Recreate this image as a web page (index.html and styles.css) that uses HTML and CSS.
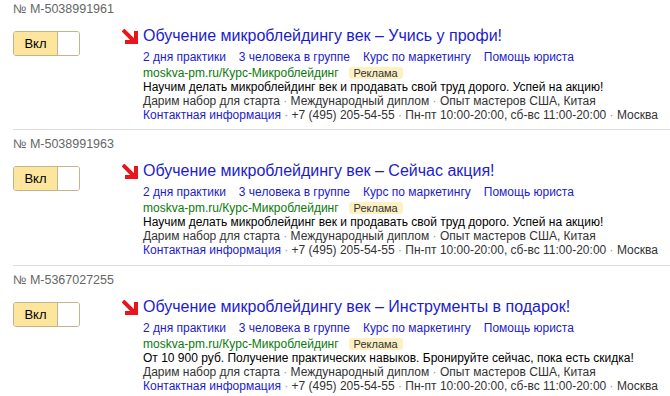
FILE: index.html
```html
<!DOCTYPE html>
<html lang="ru">
<head>
    <meta charset="UTF-8">
    <title>Объявления</title>
    <link rel="stylesheet" href="styles.css">
</head>
<body>
    <div class="list">
        <div class="banner first">
            <div class="banner-id">№ M-5038991961</div>
            <div class="banner-row">
                <div class="toggle">
                    <span class="toggle-on">Вкл</span>
                    <span class="toggle-off"></span>
                </div>
                <div class="ad">
                    <div class="ad-title">
                        <svg class="arrow" width="16" height="15" viewBox="0 0 16 15">
                            <path d="M1 1 L12 12" stroke="#e8151b" stroke-width="4" fill="none"/>
                            <path d="M3 13 L14 13 L14 2" stroke="#e8151b" stroke-width="4" fill="none" stroke-linejoin="miter"/>
                        </svg>
                        <a href="#">Обучение микроблейдингу век – Учись у профи!</a>
                    </div>
                    <div class="sitelinks">
                        <a href="#">2 дня практики</a>
                        <a href="#">3 человека в группе</a>
                        <a href="#">Курс по маркетингу</a>
                        <a href="#">Помощь юриста</a>
                    </div>
                    <div class="ad-url">
                        <span class="domain">moskva-pm.ru/Курс-Микроблейдинг</span>
                        <span class="label">Реклама</span>
                    </div>
                    <div class="ad-text">Научим делать микроблейдинг век и продавать свой труд дорого. Успей на акцию!</div>
                    <div class="ad-callouts">Дарим набор для старта <span class="dot">·</span> Международный диплом <span class="dot">·</span> Опыт мастеров США, Китая</div>
                    <div class="ad-contacts"><a href="#">Контактная информация</a> <span class="dot">·</span> +7 (495) 205-54-55 <span class="dot">·</span> Пн-пт 10:00-20:00, сб-вс 11:00-20:00 <span class="dot">·</span> Москва</div>
                </div>
            </div>
        </div>

        <div class="banner">
            <div class="banner-id">№ M-5038991963</div>
            <div class="banner-row">
                <div class="toggle">
                    <span class="toggle-on">Вкл</span>
                    <span class="toggle-off"></span>
                </div>
                <div class="ad">
                    <div class="ad-title">
                        <svg class="arrow" width="16" height="15" viewBox="0 0 16 15">
                            <path d="M1 1 L12 12" stroke="#e8151b" stroke-width="4" fill="none"/>
                            <path d="M3 13 L14 13 L14 2" stroke="#e8151b" stroke-width="4" fill="none" stroke-linejoin="miter"/>
                        </svg>
                        <a href="#">Обучение микроблейдингу век – Сейчас акция!</a>
                    </div>
                    <div class="sitelinks">
                        <a href="#">2 дня практики</a>
                        <a href="#">3 человека в группе</a>
                        <a href="#">Курс по маркетингу</a>
                        <a href="#">Помощь юриста</a>
                    </div>
                    <div class="ad-url">
                        <span class="domain">moskva-pm.ru/Курс-Микроблейдинг</span>
                        <span class="label">Реклама</span>
                    </div>
                    <div class="ad-text">Научим делать микроблейдинг век и продавать свой труд дорого. Успей на акцию!</div>
                    <div class="ad-callouts">Дарим набор для старта <span class="dot">·</span> Международный диплом <span class="dot">·</span> Опыт мастеров США, Китая</div>
                    <div class="ad-contacts"><a href="#">Контактная информация</a> <span class="dot">·</span> +7 (495) 205-54-55 <span class="dot">·</span> Пн-пт 10:00-20:00, сб-вс 11:00-20:00 <span class="dot">·</span> Москва</div>
                </div>
            </div>
        </div>

        <div class="banner">
            <div class="banner-id">№ M-5367027255</div>
            <div class="banner-row">
                <div class="toggle">
                    <span class="toggle-on">Вкл</span>
                    <span class="toggle-off"></span>
                </div>
                <div class="ad">
                    <div class="ad-title">
                        <svg class="arrow" width="16" height="15" viewBox="0 0 16 15">
                            <path d="M1 1 L12 12" stroke="#e8151b" stroke-width="4" fill="none"/>
                            <path d="M3 13 L14 13 L14 2" stroke="#e8151b" stroke-width="4" fill="none" stroke-linejoin="miter"/>
                        </svg>
                        <a href="#">Обучение микроблейдингу век – Инструменты в подарок!</a>
                    </div>
                    <div class="sitelinks">
                        <a href="#">2 дня практики</a>
                        <a href="#">3 человека в группе</a>
                        <a href="#">Курс по маркетингу</a>
                        <a href="#">Помощь юриста</a>
                    </div>
                    <div class="ad-url">
                        <span class="domain">moskva-pm.ru/Курс-Микроблейдинг</span>
                        <span class="label">Реклама</span>
                    </div>
                    <div class="ad-text">От 10 900 руб. Получение практических навыков. Бронируйте сейчас, пока есть скидка!</div>
                    <div class="ad-callouts">Дарим набор для старта <span class="dot">·</span> Международный диплом <span class="dot">·</span> Опыт мастеров США, Китая</div>
                    <div class="ad-contacts"><a href="#">Контактная информация</a> <span class="dot">·</span> +7 (495) 205-54-55 <span class="dot">·</span> Пн-пт 10:00-20:00, сб-вс 11:00-20:00 <span class="dot">·</span> Москва</div>
                </div>
            </div>
        </div>
    </div>
</body>
</html>
```

FILE: styles.css
```css
body {
    margin: 0;
    font-family: "Liberation Sans", Arial, sans-serif;
    background: #fff;
    color: #000;
    overflow: hidden;
}

a {
    color: #1c1ccc;
    text-decoration: none;
}

.banner {
    margin-left: 13px;
    padding: 6px 0 8px;
    border-top: 1px solid #dcdcdc;
}

.banner.first {
    padding: 1px 0 7px;
    border-top: none;
}

.banner-id {
    font-size: 12.5px;
    line-height: 16px;
    color: #666;
}

.banner-row {
    display: flex;
    align-items: flex-start;
    margin-top: 8px;
}

.toggle {
    display: flex;
    flex-shrink: 0;
    width: 67px;
    height: 25px;
    margin-top: 6px;
    margin-right: 42px;
    box-sizing: border-box;
    border: 1px solid #c3b38e;
    border-radius: 3px;
    overflow: hidden;
    font-size: 13px;
}

.toggle-on {
    width: 43px;
    background: #fde59d;
    border-right: 1px solid #c3b38e;
    text-align: center;
    line-height: 23px;
}

.toggle-off {
    flex: 1;
    background: #fff;
}

.ad {
    font-size: 12px;
    line-height: 14px;
    white-space: nowrap;
}

.ad-title {
    display: flex;
    align-items: center;
    height: 22px;
    font-size: 16px;
}

.arrow {
    margin-right: 5px;
}

.sitelinks {
    display: flex;
    gap: 13px;
    margin-top: 3px;
    margin-left: 21px;
    line-height: 15px;
}

.ad-url {
    display: flex;
    align-items: center;
    margin-left: 21px;
    height: 15px;
}

.domain {
    color: #0a7a0a;
}

.label {
    margin-left: 10px;
    padding: 0 5px;
    background: #fdf1c4;
    border-radius: 3px;
    font-size: 11px;
    line-height: 12px;
    color: #333;
}

.ad-text,
.ad-callouts,
.ad-contacts {
    margin-left: 21px;
}

.ad-callouts,
.ad-contacts {
    color: #333;
}

.dot {
    color: #999;
}
```
